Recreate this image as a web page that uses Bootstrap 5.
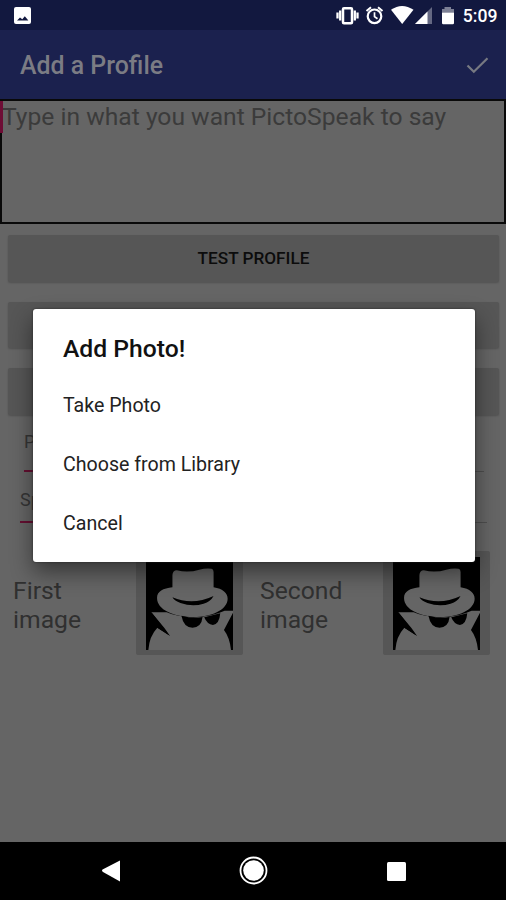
<!DOCTYPE html>
<html lang="en">
<head>
<meta charset="utf-8">
<meta name="viewport" content="width=device-width, initial-scale=1">
<title>Add a Profile</title>
<link href="https://cdn.jsdelivr.net/npm/bootstrap@5.3.0/dist/css/bootstrap.min.css" rel="stylesheet">
<style>
body{font-family:Roboto,"Liberation Sans",sans-serif;background:#656565;color:#333;line-height:1.15;height:900px;overflow:hidden}
svg{display:block;flex:none}
.statusbar{height:30px;background:#12183f;color:#fff;font-size:17.600px;font-weight:500}
.clock{width:45px;line-height:32px;padding-top:2px}
.appbar{height:69px;background:#1b214e;color:#7b7c84;padding:3px 17px 0 20px}
.appbar h1{font-size:24.900px;font-weight:500;line-height:1}
.speech{height:125px;border:2px solid #090909;color:#3b3b3b;font-size:24.650px;line-height:30px;padding-top:1px}
.caret{width:3px;height:32px;background:#6e0d35;left:-2px;top:0}
.actions{padding:11px 7px 0 8px;gap:20px}
.btn-flat{height:46.500px;background:#565656;color:#0c0c0c;border:0;border-radius:2px;font-size:17.200px;font-weight:500;padding:2px 0 0;box-shadow:0 1px 2px #0003}
.field-row{font-size:18px;color:#353535}
.field-a{margin:17px 22px 0 24px;height:40px;border-bottom:1px solid #4e4e4e}
.field-b{margin:18px 19px 0 20px;height:33px;border-bottom:1px solid #4e4e4e}
.accent{width:60px;height:2px;background:#650f31;left:0;bottom:-1px}
.pictures{margin:28px 0 0 13px}
.caption{font-size:24.700px;line-height:29px;color:#303030;padding-top:25px;width:123px}
.caption-b{margin-left:17px}
.thumb{width:107px;height:104px;background:#565656;border-radius:2px;padding:6px 0 0 10px;flex:none}
.dialog-box{left:33px;top:309px;width:441.500px;height:252.500px;border-radius:3px;box-shadow:0 0 2px #222,0 10px 22px #0007;color:#111}
.dialog-box h2{font-size:24.700px;font-weight:500;line-height:30px;margin:25px 0 0 30px;color:#111}
.choices{margin-top:13px}
.choices .list-group-item{height:59px;padding:0 30px;border:0;font-size:19.600px;color:#222;background:none}
.navkeys{height:58px;background:#000;padding:0 99px 0 101px}
</style>
<script src="https://cdn.jsdelivr.net/npm/bootstrap@5.3.0/dist/js/bootstrap.bundle.min.js"></script>
</head>
<body class="d-flex flex-column position-relative">
<header>
  <div class="statusbar d-flex align-items-center justify-content-between">
    <svg width="36" height="30" viewBox="0 0 36 30"><rect x="14" y="7" width="17" height="17" rx="2" fill="#fff"/><path d="M17 20.500l3-3 2.300 1.700 2.500-3 3.600 4.300z" fill="#12183f"/></svg>
    <div class="d-flex align-items-center">
      <svg width="127" height="30" viewBox="334 0 127 30" fill="none" stroke="#fff">
        <rect x="343" y="8.200" width="9" height="15" rx="1" stroke-width="2.500"/>
        <path d="M340.200 10.500v10M354.800 10.500v10" stroke-width="2.300"/><path d="M337.500 12.500v6M357.500 12.500v6" stroke-width="2.300"/>
        <circle cx="374.500" cy="16.300" r="6.800" stroke-width="2.200"/><path d="M374.500 12.300v4.300l3 2.200" stroke-width="1.700"/><path d="M366.500 11l4.500-3.800M382.500 11L378 7.200" stroke-width="2"/>
        <g stroke="none" fill="#fff"><path d="M391 9.800Q402 2.200 413.500 9.800L402.200 24z"/>
        <path d="M432 7v17h-17z" fill-opacity=".35"/><path d="M427.500 11.500V24H415z"/>
        <path d="M442 9h2.500V7h6.500v2h3v3.500h-12z" fill-opacity=".45"/><path d="M442 12.500h12V23a1.200 1.200 0 0 1-1.200 1.200h-9.600A1.200 1.200 0 0 1 442 23z"/></g>
      </svg>
      <span class="clock ps-0">&#8202;5:09</span>
    </div>
  </div>
  <div class="appbar d-flex align-items-center justify-content-between">
    <h1 class="m-0">Add a Profile</h1>
    <svg width="23" height="18" viewBox="0 0 23 18" fill="none" stroke="#777982" stroke-width="2.200"><path d="M1.500 8.500l6.300 6.300L21.500 1.200"/></svg>
  </div>
</header>
<main class="flex-grow-1">
  <div class="speech position-relative">Type in what you want PictoSpeak to say<span class="caret position-absolute"></span></div>
  <div class="actions d-grid">
    <button class="btn btn-flat" type="button">TEST PROFILE</button>
    <button class="btn btn-flat" type="button" aria-label="First action"></button>
    <button class="btn btn-flat" type="button" aria-label="Second action"></button>
  </div>
  <div class="field-row field-a position-relative"><span>P</span><span class="accent position-absolute"></span></div>
  <div class="field-row field-b position-relative"><span>Sp</span><span class="accent position-absolute"></span></div>
  <div class="pictures d-flex">
    <div class="caption">First<br>image</div>
    <div class="thumb"><svg width="87" height="93" viewBox="48 51 260 279" preserveAspectRatio="none"><g id="spy"><path fill="#000" d="M48 51h260v279H48z"/><g fill="#656565"><path d="M127 105Q128 91 140 91Q175 99 207 89Q225 84 244 86Q250 87 250 96V142C278 146 292 160 292 176C292 209 243 231 190 231C130 231 81 209 81 174C81 154 99 145 127 142z"/><path d="M64 217H110Q140 231 190 232Q245 230 283 212H308V218L281 270Q298 292 302 330H55Q58 288 82 263L117 286z"/></g><path fill="#000" d="M127 172Q187 198 250 168Q241 185 220 191Q187 201 151 189Q133 183 127 172zM154 227Q187 236 217 231Q214 262 187 263Q160 262 154 227zM222 232L270 220Q267 253 248 255Q231 254 222 232zM82 263L120 288L103 264L64 217z"/></g></svg></div>
    <div class="caption caption-b">Second<br>image</div>
    <div class="thumb"><svg width="87" height="93" viewBox="48 51 260 279" preserveAspectRatio="none"><use href="#spy"/></svg></div>
  </div>
</main>
<footer class="navkeys d-flex align-items-center justify-content-between">
  <svg width="20" height="22" viewBox="0 0 20 22" fill="#fff"><path d="M1 10.500Q1 9.800 2 9.200L19 .5V21.500L2 12Q1 11.300 1 10.500z"/></svg>
  <svg width="30" height="30" viewBox="0 0 30 30" fill="#fff"><circle cx="14.500" cy="14.500" r="13" fill="none" stroke="#fff" stroke-width="1.800"/><circle cx="14.500" cy="14.500" r="10.300"/></svg>
  <svg width="21" height="21" viewBox="0 0 21 21" fill="#fff"><rect x="1" y="1" width="19" height="19" rx="1.500"/></svg>
</footer>
<section class="dialog-box bg-white position-absolute" role="dialog" aria-label="Add Photo!">
  <h2>Add Photo!</h2>
  <div class="choices list-group list-group-flush">
    <a class="list-group-item d-flex align-items-center">Take Photo</a>
    <a class="list-group-item d-flex align-items-center">Choose from Library</a>
    <a class="list-group-item d-flex align-items-center">Cancel</a>
  </div>
</section>
</body>
</html>
